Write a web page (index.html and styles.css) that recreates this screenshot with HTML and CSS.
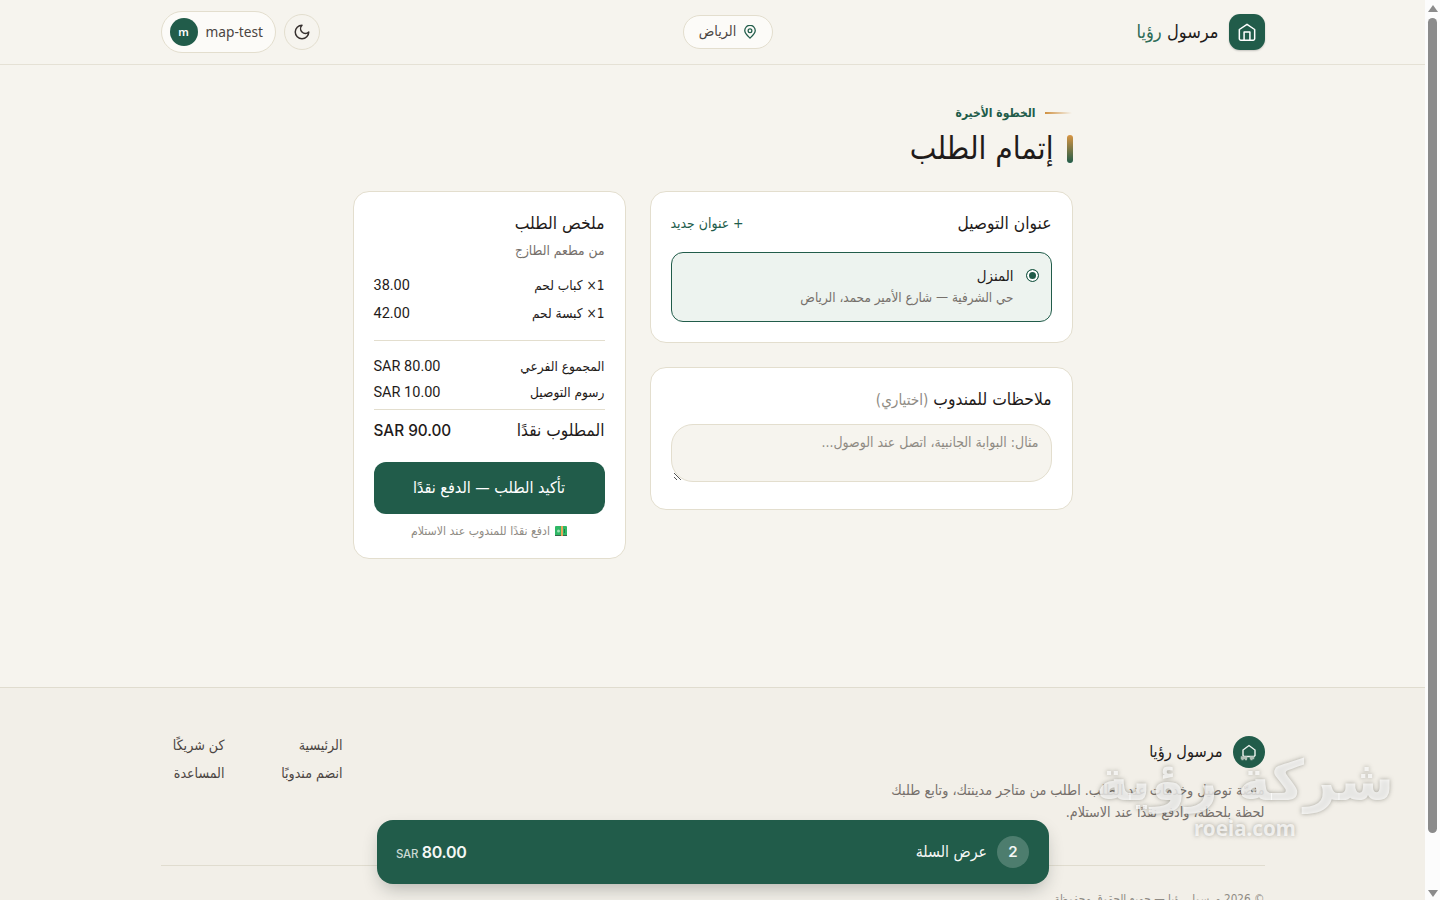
FILE: index.html
```
<!DOCTYPE html>
<html lang="ar">
<head>
    <meta charset="UTF-8">
    <title>إتمام الطلب</title>
    <link rel="stylesheet" href="styles.css">
</head>
<body>
<div class="window">
    <div class="page" dir="rtl">
        <header class="header">
            <div class="container header-row">
                <div class="brand">
                    <span class="brand-logo">
                        <svg width="20" height="20" viewBox="0 0 24 24" fill="none" stroke="currentColor" stroke-width="1.8" stroke-linejoin="round" stroke-linecap="round"><path d="M2.8 9 12 2.800l9.200 6.200V20a1.800 1.800 0 0 1-1.800 1.800H4.600A1.800 1.800 0 0 1 2.800 20z"/><path d="M8.500 21.500v-9.500h7v9.500"/></svg>
                    </span>
                    <span class="brand-name t">مرسول <b>رؤيا</b></span>
                </div>
                <div class="city">
                    <svg width="14" height="14" viewBox="0 0 24 24" fill="none" stroke="currentColor" stroke-width="2.200"><path d="M12 22.500c-3-2.700-9-7.800-9-13a9 9 0 0 1 18 0c0 5.200-6 10.300-9 13z"/><circle cx="12" cy="9.800" r="3.200"/></svg>
                    <span class="city-name t">الرياض</span>
                </div>
                <div class="tools">
                    <span class="theme">
                        <svg width="18" height="18" viewBox="0 0 24 24" fill="none" stroke="currentColor" stroke-width="2" stroke-linecap="round" stroke-linejoin="round"><path d="M12 3a6 6 0 0 0 9 9 9 9 0 1 1-9-9z"/></svg>
                    </span>
                    <div class="user" dir="ltr">
                        <span class="avatar">m</span>
                        <span class="user-name">map-test</span>
                    </div>
                </div>
            </div>
        </header>

        <main class="checkout">
            <div class="eyebrow"><i></i><span class="eyebrow-text t">الخطوة الأخيرة</span></div>
            <h1 class="title"><i></i><span class="title-text t">إتمام الطلب</span></h1>

            <div class="grid">
                <div class="col">
                    <section class="card">
                        <div class="card-head">
                            <h2 class="t">عنوان التوصيل</h2>
                            <a class="add t">+ عنوان جديد</a>
                        </div>
                        <div class="address">
                            <span class="radio"></span>
                            <div class="address-text">
                                <div class="address-name t">المنزل</div>
                                <div class="address-line t">حي الشرفية — شارع الأمير محمد، الرياض</div>
                            </div>
                        </div>
                    </section>
                    <section class="card card-notes">
                        <h2 class="t">ملاحظات للمندوب <small>(اختياري)</small></h2>
                        <div class="notes">
                            <span class="notes-hint t">مثال: البوابة الجانبية، اتصل عند الوصول...</span>
                            <svg class="grip" width="9" height="9" viewBox="0 0 9 9" stroke="#555"><path d="M1 1l7 7M1 5l3 3"/></svg>
                        </div>
                    </section>
                </div>

                <aside class="card summary">
                    <h2 class="t">ملخص الطلب</h2>
                    <div class="store t">من مطعم الطازج</div>
                    <div class="items">
                        <div class="row"><span class="t">1× كباب لحم</span><span class="num" dir="ltr">38.00</span></div>
                        <div class="row"><span class="t">1× كبسة لحم</span><span class="num" dir="ltr">42.00</span></div>
                    </div>
                    <div class="fees">
                        <div class="row"><span class="t">المجموع الفرعي</span><span class="num" dir="ltr">SAR 80.00</span></div>
                        <div class="row"><span class="t">رسوم التوصيل</span><span class="num" dir="ltr">SAR 10.00</span></div>
                    </div>
                    <div class="total"><span class="t">المطلوب نقدًا</span><span class="total-num" dir="ltr">SAR 90.00</span></div>
                    <div class="confirm"><span class="t">تأكيد الطلب — الدفع نقدًا</span></div>
                    <div class="cash">
                        <svg width="12" height="10" viewBox="0 0 12 10"><rect width="12" height="10" rx="1" fill="#2fb765"/><path d="M0 9h12v1H0z" fill="#36634b"/><circle cx="3.500" cy="5" r="1.500" fill="#9be0b4"/><path d="M6 0h2v10H6z" fill="#e8a55b"/><path d="M9 3h1v4H9z" fill="#1d7f49"/></svg>
                        <span class="t">ادفع نقدًا للمندوب عند الاستلام</span>
                    </div>
                </aside>
            </div>
        </main>

        <footer class="footer">
            <div class="container">
                <div class="footer-top">
                    <div class="about">
                        <div class="footer-brand">
                            <span class="footer-logo">
                                <svg width="18" height="18" viewBox="0 0 18 18" fill="none"><path d="M5 13.500H4l-1-1V7l6-4.500L15 7v5.500l-1 1h-1z" stroke="#eef4f0" stroke-width="1.400"/><path d="M1.500 14h5v1.500h-5zM1.500 16.500h2M5 16.500h2M10.500 14h3v1.500h-3zM10.500 16.500h2" stroke="#aebfb6" stroke-width="1.500"/></svg>
                            </span>
                            <span class="footer-name t">مرسول رؤيا</span>
                        </div>
                        <p><span class="about-one t">منصّة توصيل وخدمات عند الطلب. اطلب من متاجر مدينتك، وتابع طلبك</span><br><span class="about-two t">لحظة بلحظة، وادفع نقدًا عند الاستلام.</span></p>
                    </div>
                    <ul class="links">
                        <li class="t">الرئيسية</li>
                        <li class="t">كن شريكًا</li>
                        <li class="t">انضم مندوبًا</li>
                        <li class="t">المساعدة</li>
                    </ul>
                </div>
                <div class="copy"><span class="t">© 2026 مرسول رؤيا — جميع الحقوق محفوظة</span></div>
            </div>
        </footer>

        <div class="cart">
            <div class="cart-main"><span class="count">2</span><span class="cart-label t">عرض السلة</span></div>
            <div class="cart-sum" dir="ltr"><small>SAR</small> 80.00</div>
        </div>
    </div>

    <div class="scrollbar">
        <span class="arrow arrow-up"></span>
        <span class="thumb"></span>
        <span class="arrow arrow-down"></span>
    </div>

    <div class="watermark">
        <div class="watermark-name" dir="rtl">شركة رؤية</div>
        <div class="watermark-site">roeia.com</div>
    </div>
</div>
</body>
</html>
```
FILE: styles.css
```
* {
    margin: 0;
    padding: 0;
    box-sizing: border-box;
}

body {
    font-family: Roboto, "DejaVu Sans Condensed", "DejaVu Sans", sans-serif;
    font-size: 14px;
    color: #1f1b1a;
    background: #f6f4ee;
}

ul {
    list-style: none;
}

.t {
    white-space: nowrap;
    font-family: "DejaVu Sans Condensed", "DejaVu Sans", sans-serif;
    font-stretch: condensed;
}

.window {
    position: relative;
    display: flex;
    width: 1440px;
    height: 900px;
    overflow: hidden;
}

.page {
    position: relative;
    width: 1425px;
    height: 900px;
    overflow: hidden;
}

.container {
    width: 1104px;
    margin: 0 auto;
}

/* header */
.header {
    height: 65px;
    border-bottom: 1px solid #e5e1d5;
}

.header-row {
    display: flex;
    justify-content: space-between;
    align-items: center;
    height: 64px;
}

.brand {
    display: flex;
    align-items: center;
    gap: 10px;
}

.brand-logo {
    display: flex;
    align-items: center;
    justify-content: center;
    width: 36px;
    height: 36px;
    border-radius: 11px;
    background: #215c4a;
    color: #fff;
    box-shadow: 0 1px 2px rgba(0, 0, 0, .2);
}

.brand-name {
    padding-bottom: 2px;
    font-size: 18.1px;
}

.brand-name b {
    font-weight: normal;
    color: #2d6b57;
}

.city {
    display: flex;
    align-items: center;
    justify-content: center;
    gap: 7px;
    width: 90px;
    height: 34px;
    border: 1px solid #e3dece;
    border-radius: 17px;
    background: #fcfbf8;
    color: #215c4a;
}

.city-name {
    padding-bottom: 2px;
    font-size: 14.3px;
    color: #4b4542;
}

.tools {
    display: flex;
    align-items: center;
    gap: 8px;
}

.theme {
    display: flex;
    align-items: center;
    justify-content: center;
    width: 36px;
    height: 36px;
    border: 1px solid #e3dece;
    border-radius: 50%;
    color: #37312f;
}

.user {
    display: flex;
    align-items: center;
    gap: 8px;
    width: 115px;
    height: 42px;
    padding-left: 8px;
    border: 1px solid #e3dece;
    border-radius: 21px;
    background: #fcfbf8;
}

.avatar {
    width: 28px;
    height: 28px;
    border-radius: 50%;
    background: #215c4a;
    color: #fff;
    font: 600 11px/28px "Noto Sans", sans-serif;
    text-align: center;
}

.user-name {
    padding-bottom: 1px;
    font-family: "Noto Sans", sans-serif;
    font-size: 13.7px;
    color: #4b4542;
}

/* checkout */
.checkout {
    width: 720px;
    height: 622px;
    margin: 0 auto;
    padding-top: 38px;
}

.eyebrow {
    display: flex;
    align-items: center;
    gap: 9px;
    height: 20px;
    padding-right: 1px;
}

.eyebrow i {
    width: 27px;
    height: 2px;
    background: linear-gradient(to right, #cf9040, rgba(207, 144, 64, 0));
}

.eyebrow-text {
    font-size: 12px;
    font-weight: bold;
    color: #215c4a;
}

.title {
    display: flex;
    align-items: center;
    gap: 13px;
    height: 52px;
    font-size: 31.4px;
    font-weight: normal;
}

.title i {
    width: 6px;
    height: 28px;
    border-radius: 3px;
    background: linear-gradient(#d89543, #215c4a);
}

.title-text {
    padding-bottom: 3px;
}

.grid {
    display: grid;
    grid-template-columns: 423px 273px;
    gap: 24px;
    align-items: start;
    padding-top: 16px;
}

.col {
    display: grid;
    gap: 24px;
}

.card {
    padding: 20px;
    border: 1px solid #e3dece;
    border-radius: 16px;
    background: #fff;
}

.card h2 {
    font-size: 17.3px;
    font-weight: normal;
    line-height: 22px;
    height: 24px;
}

.card-head {
    display: flex;
    align-items: center;
    justify-content: space-between;
    height: 24px;
    margin-bottom: 16px;
}

.add {
    padding-bottom: 2px;
    font-size: 13.9px;
    color: #215c4a;
}

.address {
    display: flex;
    gap: 12px;
    height: 70px;
    padding: 11px 12px;
    border: 1px solid #215c4a;
    border-radius: 12px;
    background: #edf3ef;
}

.radio {
    width: 13px;
    height: 13px;
    margin-top: 5px;
    border: 1px solid #215c4a;
    border-radius: 50%;
    background: #215c4a;
    box-shadow: inset 0 0 0 2px #fff;
}

.address-name {
    font-size: 14.9px;
    line-height: 24px;
}

.address-line {
    font-size: 13.4px;
    line-height: 20px;
    color: #76706b;
}

.card-notes {
    height: 143px;
}

.card-notes h2 small {
    font-size: 15.2px;
    color: #8f8b84;
}

.notes {
    position: relative;
    height: 58px;
    margin-top: 12px;
    padding: 7px 12px;
    border: 1px solid #e3dece;
    border-radius: 22px;
    background: #f6f4ee;
}

.notes-hint {
    display: block;
    font-size: 13.95px;
    line-height: 20px;
    color: #8f8b84;
}

.grip {
    position: absolute;
    left: 1px;
    bottom: 0;
}

.summary {
    height: 368px;
}

.store {
    font-size: 13.7px;
    line-height: 28px;
    color: #76706b;
}

.row,
.total {
    display: flex;
    align-items: center;
    justify-content: space-between;
}

.row {
    font-size: 13.6px;
}

.items {
    padding: 7px 0 13px;
    border-bottom: 1px solid #e3dece;
}

.items .row {
    height: 28px;
}

.num {
    font-size: 14.5px;
}

.fees {
    padding: 12px 0 4px;
    border-bottom: 1px solid #e3dece;
}

.fees .row {
    height: 26px;
}

.total {
    height: 40px;
    font-size: 17.2px;
}

.total .t {
    padding-bottom: 1px;
}

.total-num {
    font: 500 15.3px Inter, sans-serif;
}

.confirm {
    height: 52px;
    margin-top: 12px;
    border-radius: 12px;
    background: #215c4a;
    color: #fff;
    font-size: 16px;
    line-height: 51px;
    text-align: center;
}

.cash {
    display: flex;
    align-items: center;
    justify-content: center;
    gap: 5px;
    height: 33px;
    font-size: 12.2px;
    color: #8f8b84;
}

/* footer */
.footer {
    height: 213px;
    border-top: 1px solid #e0dccf;
    background: #f2efe8;
}

.footer-top {
    display: flex;
    justify-content: space-between;
    height: 178px;
    padding-top: 48px;
    border-bottom: 1px solid #e0dccf;
}

.footer-brand {
    display: flex;
    align-items: center;
    gap: 10px;
    height: 32px;
    font-size: 16.2px;
}

.footer-name {
    padding-bottom: 2px;
}

.footer-logo {
    display: flex;
    align-items: center;
    justify-content: center;
    width: 32px;
    height: 32px;
    border-radius: 50%;
    background: #215c4a;
}

.about p {
    margin-top: 11px;
    font-size: 14.2px;
    line-height: 22px;
    color: #76706b;
}

.links {
    display: grid;
    grid-template-columns: 63px 64px;
    grid-auto-rows: 28px;
    column-gap: 55px;
    align-content: start;
    margin-top: -5px;
    font-size: 14.1px;
    line-height: 28px;
    color: #4b4542;
}

.copy {
    padding-top: 24px;
    font-size: 11.65px;
    line-height: 18px;
    color: #8f8b84;
}

/* floating cart bar */
.cart {
    position: absolute;
    left: 377px;
    bottom: 16px;
    display: flex;
    align-items: center;
    justify-content: space-between;
    width: 672px;
    height: 64px;
    padding: 0 20px 0 19px;
    border-radius: 16px;
    background: #215c4a;
    color: #f4f7f5;
    box-shadow: 0 8px 18px -4px rgba(30, 40, 35, .3);
}

.cart-main {
    display: flex;
    align-items: center;
    gap: 10px;
    font-size: 15.8px;
}

.cart-label {
    padding-bottom: 1px;
}

.count {
    width: 32px;
    height: 32px;
    border-radius: 50%;
    background: #4d7d6e;
    font: 600 15px/32px Inter, sans-serif;
    text-align: center;
}

.cart-sum {
    font: 600 16px Inter, sans-serif;
    letter-spacing: -.3px;
}

.cart-sum small {
    font-size: 11.5px;
    font-weight: 500;
    color: #cbd9d3;
}

/* scrollbar */
.scrollbar {
    display: flex;
    flex-direction: column;
    align-items: center;
    width: 15px;
    height: 900px;
    padding: 5px 0 3px;
    background: #fcfcfc;
}

.arrow {
    border: 5px solid transparent;
}

.arrow-up {
    border-top: 0;
    border-bottom: 7px solid #8b8b8b;
}

.arrow-down {
    margin-top: auto;
    border-top: 7px solid #8b8b8b;
    border-bottom: 0;
}

.thumb {
    width: 9px;
    height: 815px;
    margin-top: 6px;
    border-radius: 5px;
    background: #8b8b8b;
}

.watermark {
    position: absolute;
    left: 1095px;
    top: 743px;
    width: 300px;
    color: rgba(255, 255, 255, .72);
    text-align: center;
    text-shadow: 0 0 4px rgba(90, 90, 80, .5);
}

.watermark-name {
    font: bold 56px/76px "DejaVu Sans", sans-serif;
    white-space: nowrap;
}

.watermark-site {
    font: bold 20.600px/18px "Noto Sans", sans-serif;
}
```
